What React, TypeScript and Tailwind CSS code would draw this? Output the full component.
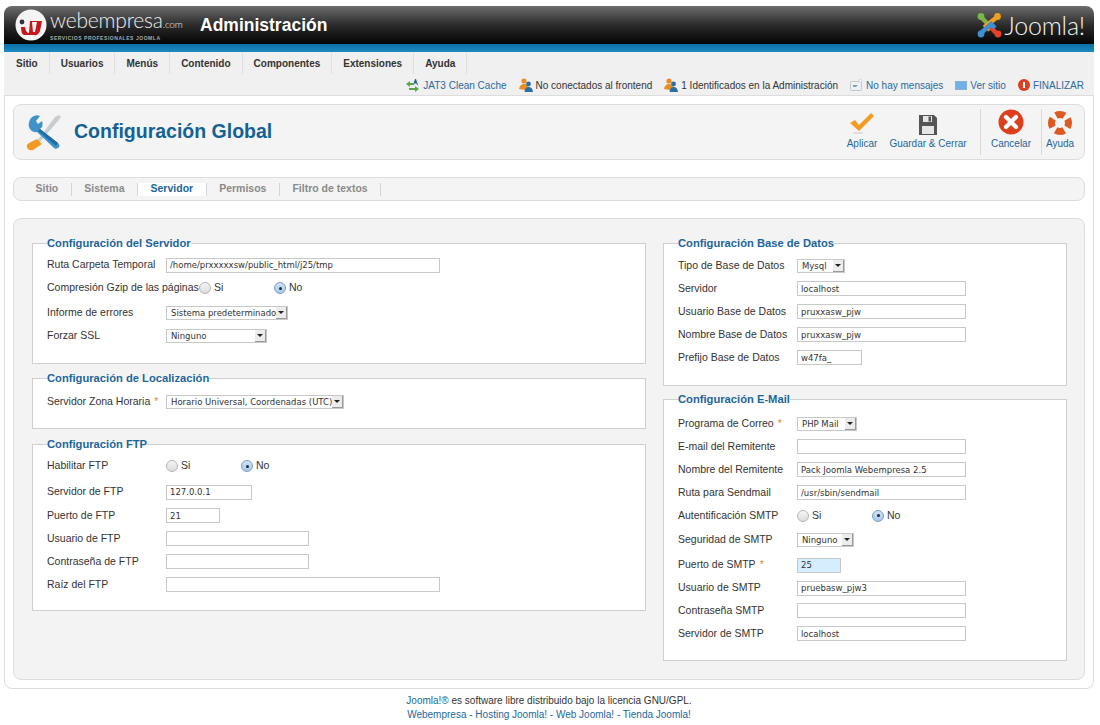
import React from "react";

function Field({ value = "", w }: { value?: string; w: string }) {
  return (
    <input
      readOnly
      value={value}
      className={`${w} h-[15px] border border-[#c8c8c8] bg-white px-[3px] font-['DejaVu_Sans',sans-serif] text-[8.5px] leading-[13px] text-[#333] outline-none`}
    />
  );
}

function Dropdown({ value, w }: { value: string; w: string }) {
  return (
    <div className={`${w} flex h-[14px] items-center justify-between border border-[#c8c8c8] bg-white pl-[4px] font-['DejaVu_Sans',sans-serif] text-[8.5px] leading-[12px] text-[#333]`}>
      <span className="whitespace-nowrap">{value}</span>
      <span className="flex h-[12px] w-[11px] items-center justify-center border-r border-b border-[#999] bg-[#ececec]">
        <span className="h-0 w-0 border-x-[3px] border-t-[3px] border-x-transparent border-t-[#222]" />
      </span>
    </div>
  );
}

function Radio({ on }: { on?: boolean }) {
  return on ? (
    <span className="flex h-[12px] w-[12px] items-center justify-center rounded-full border border-[#7d9dc4] bg-gradient-to-b from-[#cfe3f7] to-[#a9c9ea]">
      <span className="h-[3px] w-[3px] rounded-full bg-[#1d2a3a]" />
    </span>
  ) : (
    <span className="h-[12px] w-[12px] rounded-full border border-[#b5b5b5] bg-gradient-to-b from-[#f6f6f6] to-[#dcdcdc]" />
  );
}

function YesNo({ on = "no" }: { on?: string }) {
  return (
    <div className="flex items-center text-[10.5px] text-[#333]">
      <span className="flex w-[75px] items-center gap-[3px]">
        <Radio on={on === "si"} />
        Si
      </span>
      <span className="flex items-center gap-[3px]">
        <Radio on={on === "no"} />
        No
      </span>
    </div>
  );
}

function Row({ label, req, h = "h-[23px]", lw = "w-[119px]", children }: { label: string; req?: boolean; h?: string; lw?: string; children: React.ReactNode }) {
  return (
    <div className={`flex ${h} items-center`}>
      <span className={`${lw} shrink-0 whitespace-nowrap text-[10.5px] leading-[14px] text-[#333]`}>
        {label}
        {req && <span className="ml-[4px] align-top text-[#e8871e]">*</span>}
      </span>
      <div className="mt-[2px] flex items-center">{children}</div>
    </div>
  );
}

function Box({ title, className, children }: { title: string; className: string; children: React.ReactNode }) {
  return (
    <fieldset className={`border border-[#cfcfcf] bg-white px-[14px] ${className}`}>
      <legend className="h-[14px] text-[11.2px] leading-[14px] font-bold text-[#1b659b]">{title}</legend>
      {children}
    </fieldset>
  );
}

function Wrench() {
  return (
    <svg width="38" height="38" viewBox="0 0 38 38" className="shrink-0">
      <path d="M30 4 L34 2 L36 4 L33 8 L14 30 L12 28 Z" fill="#c9cdd0" />
      <path d="M12 26 L17 31 L8 37 Q3 38 2 34 Q1 32 4 30 Z" fill="#f49a24" />
      <path d="M6 5 Q10 1 15 3 L11 8 L13 11 L17 8 Q19 13 15 16 L33 30 Q36 33 33 35 Q30 37 28 34 L12 19 Q6 20 4 14 Q3 9 6 5Z" fill="#3f93c9" />
      <path d="M15 16 L33 30 L31 33 L13 18 Z" fill="#1f6fa6" />
    </svg>
  );
}

function JoomlaMark() {
  return (
    <svg width="27" height="27" viewBox="0 0 27 27" className="shrink-0">
      <path d="M6 6 L15 15" stroke="#7ab648" strokeWidth="4.5" fill="none" />
      <circle cx="5" cy="4.5" r="3.4" fill="#7ab648" />
      <path d="M21 5 L10 14 L14 18" stroke="#f29d21" strokeWidth="4.5" fill="none" />
      <circle cx="21.5" cy="4.5" r="3.4" fill="#f29d21" />
      <path d="M20 21 L12 12" stroke="#e8402b" strokeWidth="4.5" fill="none" />
      <circle cx="22" cy="22" r="3.4" fill="#e8402b" />
      <path d="M5 21 L15 12 L19 16" stroke="#3f8fd0" strokeWidth="4.5" fill="none" />
      <circle cx="5" cy="22" r="3.4" fill="#3f8fd0" />
    </svg>
  );
}

function WebMark() {
  return (
    <svg width="32" height="32" viewBox="0 0 32 32" className="shrink-0">
      <circle cx="16" cy="16" r="15.5" fill="#f4f4f4" />
      <circle cx="7" cy="13" r="2.4" fill="#333" />
      <path d="M6 18 H10 Q11 24 14 24 L15 12 H27 L25 22 Q23 27 19 26 H9 Q6 25 6 18Z" fill="#c8161d" />
      <path d="M17 13 L18 23 H20 L22 13Z" fill="#f4f4f4" />
    </svg>
  );
}

function People() {
  return (
    <svg width="14" height="14" viewBox="0 0 14 14" className="shrink-0">
      <circle cx="5" cy="3" r="2.6" fill="#e98f22" />
      <path d="M0 11 Q1 6 5 6 Q9 6 9 10 L6 12 Z" fill="#e98f22" />
      <circle cx="9.5" cy="6" r="2.4" fill="#2c6ea6" />
      <path d="M5.5 14 Q6 9 9.5 9 Q13.5 9 14 14 Z" fill="#2c6ea6" />
    </svg>
  );
}

function StatusIconJat() {
  return (
    <svg width="15" height="14" viewBox="0 0 15 14" className="shrink-0">
      <path d="M1 6 L5 3 V5 H8 V7 H5 V9 Z" fill="#58a64a" />
      <path d="M14 11 L10 14 V12 H4 V10 H10 V8 Z" fill="#58a64a" />
      <path d="M8 7 L10 1 H11 L13 7 H12 L11.6 5.5 H9.4 L9 7 Z" fill="#34618c" />
    </svg>
  );
}

function StatusMsg() {
  return (
    <svg width="13" height="12" viewBox="0 0 13 12" className="shrink-0">
      <rect x="0.5" y="2.5" width="11" height="9" rx="1" fill="#eef1f4" stroke="#c4c9ce" />
      <path d="M3 6 H8 L6 8 H3 Z" fill="#7f9db8" />
      <circle cx="10.5" cy="2" r="1.5" fill="#fff" stroke="#9bb" strokeWidth="0.5" />
    </svg>
  );
}

function Status({ icon, children, dark }: { icon: React.ReactNode; children: React.ReactNode; dark?: boolean }) {
  return (
    <span className={`flex items-center gap-[3px] whitespace-nowrap ${dark ? "text-[#333]" : "text-[#2a6a9e]"}`}>
      {icon}
      {children}
    </span>
  );
}

function ToolBtn({ icon, label, w }: { icon: React.ReactNode; label: string; w: string }) {
  return (
    <div className={`flex ${w} flex-col items-center text-[10px] leading-[12px] whitespace-nowrap text-[#24679c]`}>
      <div className="flex h-[26px] items-end justify-center">{icon}</div>
      <span className="mt-[3px]">{label}</span>
    </div>
  );
}

const menu = ["Sitio", "Usuarios", "Menús", "Contenido", "Componentes", "Extensiones", "Ayuda"];
const tabs = ["Sitio", "Sistema", "Servidor", "Permisos", "Filtro de textos"];

export default function App() {
  return (
    <div className="min-h-[725px] w-[1100px] bg-white font-['Liberation_Sans',Arial,sans-serif]">
      <div className="mx-[4px] w-[1090px] pt-[6px]">
        <header className="flex h-[38px] items-center justify-between rounded-t-[8px] bg-gradient-to-b from-[#6e6e6e] via-[#2c2c2c] to-[#050505] pr-[9px] pl-[11px]">
          <div className="flex items-center">
            <WebMark />
            <div className="ml-[3px] flex w-[150px] flex-col">
              <span className="font-['Lato',sans-serif] text-[21px] leading-[22px] font-light tracking-[-0.2px] whitespace-nowrap text-[#eee]">
                webempresa<span className="text-[10px]">.com</span>
              </span>
              <span className="text-[5px] leading-[7px] font-bold tracking-[0.55px] whitespace-nowrap text-[#aaa]">SERVICIOS PROFESIONALES JOOMLA</span>
            </div>
            <span className="text-[17.5px] font-bold text-white">Administración</span>
          </div>
          <div className="flex items-center gap-[2px]">
            <JoomlaMark />
            <span className="font-['Lato',sans-serif] text-[25px] leading-[28px] font-light tracking-[-0.2px] text-[#f2f2f2]">Joomla!</span>
          </div>
        </header>
        <div className="h-[8px] bg-gradient-to-b from-[#0c6fa6] to-[#1b8bc2]" />
        <nav className="h-[44px] border-b border-[#ddd] bg-[#f0f0f0]">
          <ul className="flex h-[22px] pl-[1px]">
            {menu.map((m) => (
              <li key={m} className="flex items-center border-r border-[#dfdfdf] px-[11px] text-[10px] font-bold whitespace-nowrap text-[#333]">
                {m}
              </li>
            ))}
          </ul>
          <div className="flex h-[22px] items-center justify-end gap-[12px] pr-[10px] text-[10px]">
            <Status icon={<StatusIconJat />}>JAT3 Clean Cache</Status>
            <Status dark icon={<People />}>No conectados al frontend</Status>
            <Status dark icon={<People />}>1 Identificados en la Administración</Status>
            <Status icon={<StatusMsg />}>No hay mensajes</Status>
            <Status icon={<span className="h-[9px] w-[12px] border border-[#8ab0d0] bg-[#6fb0e6]" />}>Ver sitio</Status>
            <Status
              icon={
                <span className="flex h-[12px] w-[12px] items-center justify-center rounded-full bg-[#d8401f]">
                  <span className="h-[6px] w-[2px] bg-white" />
                </span>
              }
            >
              FINALIZAR
            </Status>
          </div>
        </nav>

        <main className="rounded-b-[8px] border-x border-b border-[#ddd] px-[8px] pt-[8px] pb-[8px]">
          <section className="flex h-[56px] items-center justify-between rounded-[8px] border border-[#dcdcdc] bg-[#f4f4f4] pr-[7px] pl-[11px]">
            <div className="flex items-center gap-[11px]">
              <Wrench />
              <h1 className="text-[19.5px] font-bold text-[#146295]">Configuración Global</h1>
            </div>
            <div className="flex h-[46px] items-stretch">
              <ToolBtn
                w="w-[40px]"
                label="Aplicar"
                icon={
                  <svg width="26" height="24" viewBox="0 0 26 24">
                    <path d="M1 12 L6 9 L10 14 L22 2 L25 5 L10 20 Z" fill="#f29c21" />
                    <path d="M4 22 H14" stroke="#d9d9d9" strokeWidth="1.5" />
                  </svg>
                }
              />
              <ToolBtn
                w="w-[74px] ml-[9px] mr-[15px]"
                label="Guardar & Cerrar"
                icon={
                  <svg width="18" height="20" viewBox="0 0 18 20">
                    <path d="M0 0 H15 L18 3 V20 H0 Z" fill="#555" />
                    <rect x="3" y="11" width="12" height="8" fill="#e6e6e6" />
                    <rect x="4" y="1" width="9" height="6" fill="#e6e6e6" />
                    <rect x="9.5" y="1.5" width="2.5" height="5" fill="#555" />
                  </svg>
                }
              />
              <div className="w-px bg-[#d9d9d9]" />
              <ToolBtn
                w="w-[50px] mx-[5px]"
                label="Cancelar"
                icon={
                  <svg width="26" height="26" viewBox="0 0 26 26">
                    <circle cx="13" cy="13" r="12.5" fill="#dd3f1c" />
                    <path d="M8 8 L18 18 M18 8 L8 18" stroke="#fff" strokeWidth="4.2" strokeLinecap="round" />
                  </svg>
                }
              />
              <div className="w-px bg-[#d9d9d9]" />
              <ToolBtn
                w="w-[34px] ml-[1px]"
                label="Ayuda"
                icon={
                  <svg width="24" height="24" viewBox="0 0 24 24">
                    <circle cx="12" cy="12" r="8.5" fill="none" stroke="#f4f4f4" strokeWidth="7" />
                    <circle cx="12" cy="12" r="8.5" fill="none" stroke="#dd5a22" strokeWidth="7" strokeDasharray="9 4.35" strokeDashoffset="4.5" />
                  </svg>
                }
              />
            </div>
          </section>

          <div className="mt-[17px] flex h-[24px] items-center rounded-[8px] border border-[#dcdcdc] bg-[#f4f4f4] pl-[9px] text-[10.5px] font-bold">
            {tabs.map((t) => (
              <span
                key={t}
                className={`flex h-[13px] items-center border-r border-[#d5d5d5] px-[12.5px] whitespace-nowrap ${t === "Servidor" ? "bg-white text-[#1b659b]" : "text-[#8a8a8a]"}`}
              >
                {t}
              </span>
            ))}
          </div>

          <div className="mt-[17px] flex h-[462px] items-start gap-[17px] rounded-[8px] border border-[#dcdcdc] bg-[#f3f3f3] pt-[17px] pl-[18px]">
            <div className="w-[614px]">
              <Box title="Configuración del Servidor" className="pt-[3px] pb-[18px]">
                <Row label="Ruta Carpeta Temporal" h="h-[22px]"><Field w="w-[274px]" value="/home/prxxxxxsw/public_html/j25/tmp" /></Row>
                <Row label="Compresión Gzip de las páginas" lw="w-[152px]" h="h-[24px]"><YesNo /></Row>
                <Row label="Informe de errores" h="h-[26px]"><Dropdown w="w-[122px]" value="Sistema predeterminado" /></Row>
                <Row label="Forzar SSL" h="h-[20px]"><Dropdown w="w-[101px]" value="Ninguno" /></Row>
              </Box>
              <Box title="Configuración de Localización" className="mt-[7px] pb-[11px]">
                <Row label="Servidor Zona Horaria" req h="h-[32px]"><Dropdown w="w-[178px]" value="Horario Universal, Coordenadas (UTC)" /></Row>
              </Box>
              <Box title="Configuración FTP" className="mt-[8px] pb-[15px]">
                <Row label="Habilitar FTP" h="h-[28px]"><YesNo /></Row>
                <Row label="Servidor de FTP" h="h-[24px]"><Field w="w-[86px]" value="127.0.0.1" /></Row>
                <Row label="Puerto de FTP"><Field w="w-[54px]" value="21" /></Row>
                <Row label="Usuario de FTP"><Field w="w-[143px]" /></Row>
                <Row label="Contraseña de FTP"><Field w="w-[143px]" /></Row>
                <Row label="Raíz del FTP"><Field w="w-[274px]" /></Row>
              </Box>
            </div>
            <div className="w-[404px]">
              <Box title="Configuración Base de Datos" className="pt-[3px] pb-[17px]">
                <Row label="Tipo de Base de Datos"><Dropdown w="w-[48px]" value="Mysql" /></Row>
                <Row label="Servidor"><Field w="w-[169px]" value="localhost" /></Row>
                <Row label="Usuario Base de Datos"><Field w="w-[169px]" value="pruxxasw_pjw" /></Row>
                <Row label="Nombre Base de Datos"><Field w="w-[169px]" value="pruxxasw_pjw" /></Row>
                <Row label="Prefijo Base de Datos"><Field w="w-[65px]" value="w47fa_" /></Row>
              </Box>
              <Box title="Configuración E-Mail" className="mt-[6px] pt-[5px] pb-[16px]">
                <Row label="Programa de Correo" req><Dropdown w="w-[60px]" value="PHP Mail" /></Row>
                <Row label="E-mail del Remitente"><Field w="w-[169px]" /></Row>
                <Row label="Nombre del Remitente"><Field w="w-[169px]" value="Pack Joomla Webempresa 2.5" /></Row>
                <Row label="Ruta para Sendmail"><Field w="w-[169px]" value="/usr/sbin/sendmail" /></Row>
                <Row label="Autentificación SMTP"><YesNo /></Row>
                <Row label="Seguridad de SMTP" h="h-[26px]"><Dropdown w="w-[57px]" value="Ninguno" /></Row>
                <Row label="Puerto de SMTP" req h="h-[24px]">
                  <input readOnly value="25" className="h-[15px] w-[44px] border border-[#c8c8c8] bg-[#d5eeff] px-[3px] font-['DejaVu_Sans',sans-serif] text-[8.5px] text-[#333] outline-none" />
                </Row>
                <Row label="Usuario de SMTP" h="h-[22px]"><Field w="w-[169px]" value="pruebasw_pjw3" /></Row>
                <Row label="Contraseña SMTP"><Field w="w-[169px]" /></Row>
                <Row label="Servidor de SMTP"><Field w="w-[169px]" value="localhost" /></Row>
              </Box>
            </div>
          </div>
        </main>

        <footer className="pt-[5px] text-center text-[10px] leading-[14px] text-[#333]">
          <p>
            <span className="text-[#24679c]">Joomla!®</span> es software libre distribuido bajo la licencia GNU/GPL.
          </p>
          <p className="text-[#24679c]">Webempresa - Hosting Joomla! - Web Joomla! - Tienda Joomla!</p>
        </footer>
      </div>
    </div>
  );
}
